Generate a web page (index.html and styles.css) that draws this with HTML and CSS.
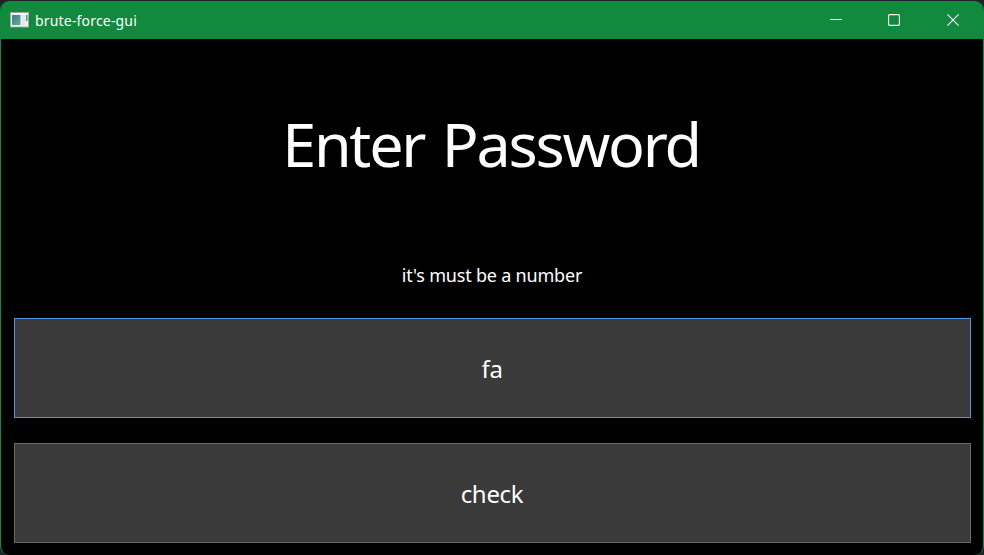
FILE: index.html
```html
<!DOCTYPE html>
<html lang="en">
<head>
<meta charset="utf-8">
<title>brute-force-gui</title>
<link rel="stylesheet" href="styles.css">
</head>
<body>
<div class="window">
  <header class="titlebar">
    <svg class="app-icon" width="19" height="16" viewBox="0 0 19 16">
      <defs><linearGradient id="pane" x1="0" y1="0" x2="1" y2="1"><stop offset="0" stop-color="#4478a0"/><stop offset="1" stop-color="#64b083"/></linearGradient></defs>
      <rect x=".5" y=".5" width="18" height="14.5" fill="#f3f3f3" stroke="#a3aaa6"/>
      <rect x="2" y="3" width="8.5" height="10" fill="url(#pane)"/>
      <rect x="11.5" y="3" width="4" height="10" fill="#e3e8ee"/>
      <rect x="16" y="3" width="1.5" height="6" fill="#4f9f78"/>
    </svg>
    <span class="caption">brute-force-gui</span>
    <div class="controls">
      <svg width="13" height="12" viewBox="0 0 13 12"><path d="M1 5.5H13"/></svg>
      <svg width="12" height="12" viewBox="0 0 12 12"><rect x=".6" y=".6" width="10.8" height="10.8" rx="1.2"/></svg>
      <svg width="12" height="12" viewBox="0 0 12 12"><path d="M.4.4 11.6 11.6M11.6.4.4 11.6"/></svg>
    </div>
  </header>
  <main class="content">
    <h1 class="heading">Enter Password</h1>
    <p class="hint">it's must be a number</p>
    <button class="field focused">fa</button>
    <button class="field check">check</button>
  </main>
</div>
</body>
</html>
```
FILE: styles.css
```css
* { box-sizing: border-box; }
body {
  margin: 0;
  height: 555px;
  padding-top: 1px;
  overflow: hidden;
  background: #202329;
  color: #fff;
  font-family: "Noto Sans", "Open Sans", sans-serif;
}
.window {
  height: 554px;
  border: 1px solid #118a3e;
  border-top: 0;
  border-bottom: 0;
  border-radius: 9px;
  background: #000;
  overflow: hidden;
}
.titlebar {
  display: flex;
  align-items: center;
  height: 38px;
  padding-left: 9px;
  background: #118a3e;
}
.caption {
  margin-left: 6px;
  font-size: 14px;
  letter-spacing: 0.18px;
}
.controls {
  display: flex;
  gap: 47px;
  margin-left: auto;
  padding-right: 24px;
}
.controls svg:first-child { margin-right: -1px; }
.controls svg {
  fill: none;
  stroke: #fff;
  stroke-width: 1.1;
}
.content {
  display: flex;
  flex-direction: column;
  padding: 0 12px 0 13px;
}
.heading {
  margin: 65px 3px 0 0;
  height: 80px;
  line-height: 80px;
  font-size: 61px;
  font-weight: 400;
  text-align: center;
  letter-spacing: -2.25px;
  word-spacing: 4px;
}
.hint {
  margin: 77px 1px 0 0;
  height: 28px;
  line-height: 28px;
  font-size: 18px;
  text-align: center;
  letter-spacing: -0.2px;
}
.field {
  height: 100px;
  margin-top: 29px;
  padding: 0 1px 0 0;
  border: 1px solid #696969;
  background: #3a3a3a;
  color: #fff;
  font: 24px "Noto Sans", "Open Sans", sans-serif;
  letter-spacing: -0.3px;
}
.focused { border-color: #5294e2; }
.check { margin-top: 25px; }
```
